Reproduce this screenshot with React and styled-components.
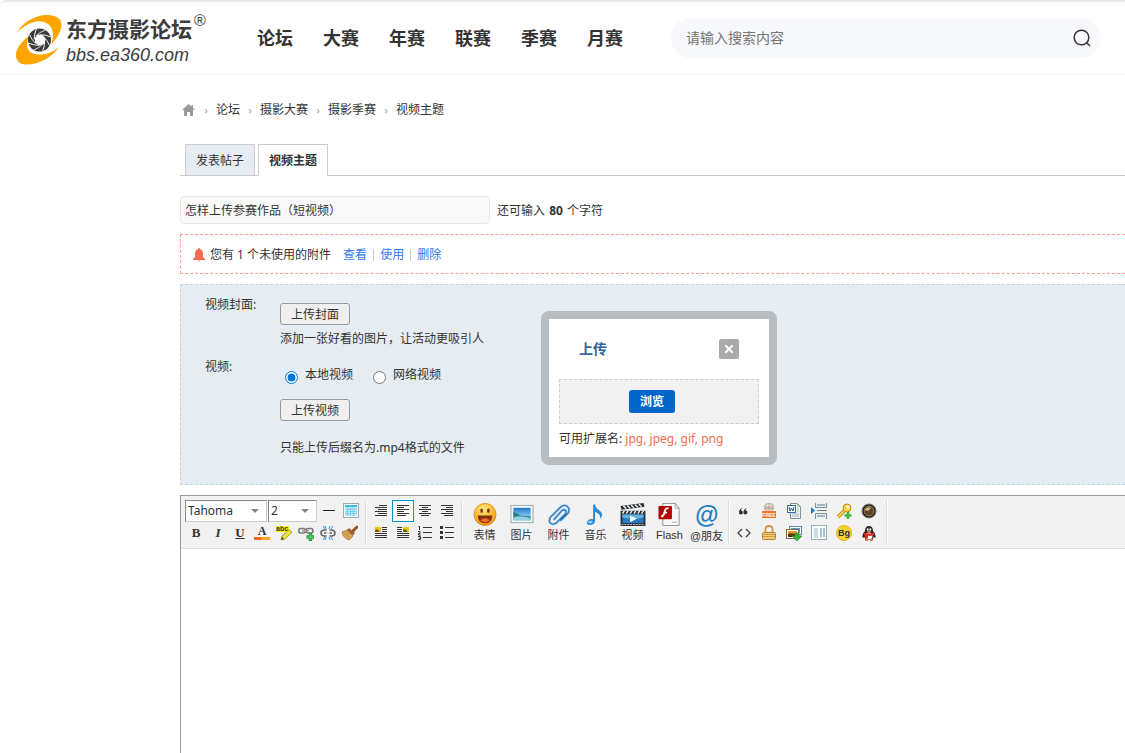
import React, { useState } from 'react';
import styled, { createGlobalStyle, css } from 'styled-components';

const uiFont = '"Noto Sans", "Noto Sans CJK SC", sans-serif';

const GlobalStyle = createGlobalStyle`
    * {
        box-sizing: border-box;
    }
    body {
        margin: 0;
        background: #fff;
        color: #333;
        font: 12px/20px ${uiFont};
    }
    button, input, select, textarea {
        font: inherit;
        color: inherit;
    }
    a {
        color: inherit;
        text-decoration: none;
    }
`

const Page = styled.div`
    display: flex;
    flex-direction: column;
    min-height: 100vh;
`

/* header */
const Header = styled.header`
    display: flex;
    align-items: center;
    height: 75px;
    padding: 0 24px 0 15px;
    border-top: 2px solid #e9e9e9;
    border-bottom: 1px solid #f6f6f6;
    border-top-left-radius: 6px;
`
const Logo = styled.a`
    display: flex;
    align-items: center;
    gap: 3px;
    flex: none;
    width: 242px;
    padding-top: 4px;
    color: #3c3c3c;
`
const LogoText = styled.span`
    display: flex;
    flex-direction: column;
    white-space: nowrap;
`
const LogoName = styled.strong`
    font: 700 21px/30px "Noto Sans CJK SC", sans-serif;

    & > sup {
        position: absolute;
        margin: -2px 0 0 2px;
        font: 16px/20px "Liberation Sans", sans-serif;
    }
`
const LogoHost = styled.span`
    font: italic 18px/24px "Liberation Sans", sans-serif;
`
const Nav = styled.nav`
    display: flex;
    gap: 30px;
    margin-right: 48px;
    font-size: 18px;
    line-height: 28px;
    font-weight: 700;
    white-space: nowrap;
`
const SearchBox = styled.form`
    display: flex;
    align-items: center;
    flex: 1;
    height: 40px;
    padding: 0 8px 0 15px;
    border-radius: 20px;
    background: #f6f8fc;

    & > input {
        flex: 1;
        min-width: 0;
        padding: 0;
        border: 0;
        outline: 0;
        background: none;
        font-size: 14px;
    }
    & > input::placeholder {
        color: #757575;
    }
    & > button {
        display: flex;
        padding: 0;
        border: 0;
        background: none;
    }
`

/* content */
const Main = styled.main`
    display: flex;
    flex-direction: column;
    flex: 1;
    padding: 21px 0 0 180px;
`
const Crumbs = styled.nav`
    display: flex;
    align-items: center;
    height: 28px;
    margin-bottom: 20px;

    & > a:first-child {
        display: flex;
        padding: 0 1px 0 2px;
    }
    & > i {
        width: 20px;
        color: #999;
        font-size: 10px;
        font-style: normal;
        text-align: center;
    }
`
const Tabs = styled.nav`
    display: flex;
    gap: 3px;
    margin-bottom: 20px;
    padding-left: 5px;
    box-shadow: inset 0 -1px #cdcdcd;
`
const Tab = styled.a`
    height: 32px;
    padding: 0 10px;
    border: 1px solid #cdcdcd;
    background: #e5edf2;
    line-height: 31px;

    ${props => props.$active && css`
        border-bottom-color: #fff;
        background: #fff;
        font-weight: 700;
    `}
`
const TitleRow = styled.div`
    display: flex;
    align-items: baseline;
    gap: 7px;
    margin-bottom: 10px;

    & strong {
        margin: 0 1px;
    }
`
const TitleInput = styled.input`
    width: 310px;
    height: 28px;
    padding: 0 4px;
    border: 1px solid #e6e6f2;
    border-radius: 4px;
    background: #f9f9f9;
`
const Notice = styled.div`
    display: flex;
    align-items: center;
    height: 40px;
    margin-bottom: 10px;
    padding: 2px 0 0 12px;
    border: 1px dashed #f99;
    border-right: 0;

    & > span {
        margin: 0 12px 0 5px;
    }
    & > a {
        color: #2b7af5;
    }
    & > i {
        width: 1px;
        height: 12px;
        margin: 0 6px;
        background: #ccc;
    }
`
const VideoPanel = styled.section`
    position: relative;
    display: grid;
    grid-template-columns: 75px 1fr;
    row-gap: 8px;
    margin-bottom: 10px;
    padding: 10px 24px 26px;
    border: 1px dashed #bdd7e5;
    border-right: 0;
    background: #e5ecf2;
`
const Field = styled.div`
    display: flex;
    flex-direction: column;
    align-items: flex-start;
    padding-top: 8px;
`
const PlainButton = styled.button`
    height: 22px;
    padding: 2px 10px 0;
    border: 1px solid #999;
    border-radius: 3px;
    background: #efefef;
    line-height: 18px;
`
const Radios = styled.div`
    display: flex;
    gap: 20px;
    height: 22px;
    margin-bottom: 12px;
    padding-left: 5px;

    & > label {
        display: flex;
        gap: 7px;
    }
    & input {
        width: 13px;
        height: 13px;
        margin: 6px 0 0;
        accent-color: #0078d7;
    }
`
const Hint = styled.p`
    margin: ${props => props.$top}px 0 0;
`

/* upload window */
const Dialog = styled.div`
    position: absolute;
    top: 26px;
    left: 360px;
    width: 236px;
    padding: 20px 10px 8px;
    border: 8px solid #b7bdc1;
    border-radius: 8px;
    background: #fff;
`
const DialogHead = styled.div`
    display: flex;
    align-items: center;
    justify-content: space-between;
    margin-bottom: 20px;
    padding: 0 20px;

    & > h3 {
        margin: 0;
        color: #369;
        font-size: 14px;
        line-height: 20px;
        font-weight: 700;
    }
    & > button {
        display: flex;
        align-items: center;
        justify-content: center;
        width: 20px;
        height: 20px;
        padding: 0;
        border: 0;
        border-radius: 2px;
        background: #aaa;
    }
`
const DropArea = styled.div`
    display: flex;
    align-items: center;
    justify-content: center;
    height: 45px;
    margin-bottom: 5px;
    padding-right: 14px;
    border: 1px dashed #ccc;
    background: #f1f1f1;

    & > button {
        height: 23px;
        padding: 0 11px;
        border: 0;
        border-radius: 3px;
        background: #06c;
        color: #fff;
        font-weight: 700;
        line-height: 23px;
    }
`
const Extensions = styled.p`
    margin: 0;
    white-space: nowrap;

    & > span {
        color: #f26c4f;
    }
`

/* editor */
const Editor = styled.section`
    display: flex;
    flex-direction: column;
    flex: 1;
    border-top: 1px solid #999;
    border-left: 1px solid #999;

    & > textarea {
        flex: 1;
        min-height: 200px;
        padding: 8px;
        border: 0;
        outline: 0;
        resize: none;
    }
`
const Toolbar = styled.div`
    display: flex;
    padding: 4px 0;
    border-bottom: 1px solid #ddd;
    background: #f2f2f2;
`
const Group = styled.div`
    padding: ${props => props.$wide ? '0 5px 0 2px' : '0 3px 0 4px'};
    border-right: 1px solid #ddd;
    box-shadow: 1px 0 #fff;
`
const ToolRow = styled.div`
    display: flex;
    height: 22px;
`
const SelectBox = styled.label`
    display: grid;
    align-items: center;
    width: ${props => props.$width}px;
    margin-right: 1px;
    border: 1px solid #ccc;
    border-top-color: #888;
    border-left-color: #888;
    background: #fff;

    & > select, & > svg {
        grid-area: 1 / 1;
    }
    & > select {
        height: 20px;
        padding: 0 0 0 2px;
        border: 0;
        outline: 0;
        appearance: none;
        background: none;
        font-size: 12px;
        line-height: 20px;
    }
    & > svg {
        justify-self: end;
        margin-right: 7px;
        pointer-events: none;
    }
`
const Tool = styled.button`
    display: flex;
    align-items: center;
    justify-content: center;
    width: ${props => props.$wide ? 25 : 22}px;
    height: 22px;
    padding: 0;
    border: 1px solid ${props => props.$active ? '#09c' : 'transparent'};
    background: ${props => props.$active ? '#fff' : 'none'};
`
const Letter = styled.span`
    font: bold 13px/16px "Liberation Serif", serif;
    font-style: ${props => props.$italic ? 'italic' : 'normal'};
    text-decoration: ${props => props.$underline ? 'underline' : 'none'};
`
const BigTool = styled.button`
    display: flex;
    flex-direction: column;
    align-items: center;
    width: 37px;
    height: 44px;
    padding: 3px 0 0;
    border: 0;
    background: none;
    font: 11px/18px "Liberation Sans", "Noto Sans CJK SC", sans-serif;
    white-space: nowrap;
`
const AtSign = styled.span`
    height: 24px;
    color: #237dc1;
    font: italic bold 24px/24px "Liberation Sans", sans-serif;
`

const Svg = ({ size = 16, children }) => (
    <svg width={size} height={size} viewBox={`0 0 ${size} ${size}`} fill="none" aria-hidden="true">
        {children}
    </svg>
)

// rows of [x, y, width]
const Lines = ({ rows, children }) => (
    <Svg>
        {rows.map(([x, y, w]) => <rect key={y} x={x} y={y} width={w} height="1" fill="#333" />)}
        {children}
    </Svg>
)

const Blades = () => (
    <g>
        <circle cx="24.5" cy="26" r="11.5" fill="#3c3c3c" />
        <path d="M23 20.500l5 1 2.500 4-1.500 4.500-5 1.500-4-3 0-5z" fill="#fff" />
        {[0, 45, 90, 135, 180, 225, 270, 315].map(a => (
            <path key={a} d="M21 22Q25 18 30 16" stroke="#fff" strokeWidth=".9" transform={`rotate(${a} 24.500 26)`} />
        ))}
    </g>
)

const LogoMark = () => (
    <svg width="48" height="52" viewBox="0 0 48 52" fill="none" aria-hidden="true">
        <path d="M2 19C8 6 27-2 39 2c11 3 10 15-3 29 4-11 2-20-7-23C20 5 9 11 2 19z" fill="#ffa500" />
        <path d="M14 22C1 31-3 44 5 49c10 5 31-3 39-16-7 6-16 9-24 7-8-2-10-9-6-18z" fill="#ffa500" />
        <Blades />
    </svg>
)

const icons = {
    hr: <Svg><rect x="2" y="7" width="12" height="1" fill="#222" /></Svg>,
    table: (
        <Svg>
            <rect x=".5" y=".5" width="15" height="14" fill="#fff" stroke="#9aabb2" />
            <rect x="2" y="2" width="12" height="11" fill="#bfeafb" />
            <rect x="2" y="2" width="12" height="2" fill="#37b6e8" />
            <path d="M2 6.500h12M2 8.500h12M2 10.500h12M4.500 2v11M7.500 2v11M10.500 2v11" stroke="#66c8ee" strokeWidth=".7" />
        </Svg>
    ),
    color: (
        <Svg>
            <text x="8" y="10" textAnchor="middle" fill="#333" fontFamily="Liberation Serif" fontWeight="bold" fontSize="12">A</text>
            <rect y="12" width="16" height="3" fill="#f26c1a" />
            <rect x="7" y="12" width="9" height="3" fill="#ffa51f" />
        </Svg>
    ),
    mark: (
        <Svg>
            <rect y="1" width="13" height="6" fill="#fff200" />
            <text x="0" y="6" fill="#333" fontFamily="Liberation Sans" fontWeight="bold" fontSize="7">abc</text>
            <path d="M13 5l3 2-7 7-4 1 1-4z" fill="#f1e52e" stroke="#93921c" strokeWidth=".8" />
            <path d="M5 15l1-3 2 2z" fill="#444" />
        </Svg>
    ),
    link: (
        <Svg>
            <rect x=".7" y="3.500" width="7" height="4.500" rx="2.200" stroke="#777" strokeWidth="1.500" />
            <rect x="8" y="3.500" width="7" height="4.500" rx="2.200" stroke="#777" strokeWidth="1.500" />
            <path d="M4 5.700h7" stroke="#999" strokeWidth="1.500" />
            <path d="M12.500 8v8M8.500 12h7.500" stroke="#25953a" strokeWidth="3.400" />
            <path d="M12.500 9v6M9.500 12h6" stroke="#57cc5c" strokeWidth="1.600" />
        </Svg>
    ),
    unlink: (
        <Svg>
            <path d="M6.500 5H4Q1 5.500 1 8t3 3h2.500M9.500 5H12q3 .5 3 3t-3 3H9.500M4 8h2.500M9.500 8H12" stroke="#666" strokeWidth="1.600" />
            <path d="M5 1l1 3M10 1L9 4M13 1l-2 3M3 1l2 3M5 15l1-3M10 15l-1-3M13 15l-2-3M3 15l2-3" stroke="#4d94d8" />
        </Svg>
    ),
    brush: (
        <Svg>
            <path d="M15 2l-4 4" stroke="#8d531e" strokeWidth="3" strokeLinecap="round" />
            <path d="M7 3l6 5-3 3-6-5z" fill="#9a6235" />
            <path d="M5 5l6 6-4 4Q1 13 0 7z" fill="#dda657" stroke="#9b662b" strokeWidth=".7" />
            <path d="M2 8l5 5M4 7l4 5" stroke="#b57d3a" strokeWidth=".7" />
        </Svg>
    ),
    typeset: <Lines rows={[[6, 2, 8], [2, 4, 12], [5, 6, 9], [2, 8, 12], [5, 10, 9], [2, 12, 12]]} />,
    left: <Lines rows={[[2, 2, 12], [2, 4, 7], [2, 6, 12], [2, 8, 7], [2, 10, 12], [2, 12, 9]]} />,
    center: <Lines rows={[[2, 2, 12], [5, 4, 6], [2, 6, 12], [5, 8, 6], [2, 10, 12], [4, 12, 8]]} />,
    right: <Lines rows={[[2, 2, 12], [7, 4, 7], [2, 6, 12], [7, 8, 7], [2, 10, 12], [5, 12, 9]]} />,
    floatLeft: (
        <Lines rows={[[9, 2, 5], [9, 4, 5], [9, 6, 5], [2, 8, 12], [2, 10, 12], [2, 12, 12]]}>
            <rect x="2" y="2" width="6" height="5" fill="#f0c419" /><path d="M2 7V5l2-1 3 3z" fill="#755a12" />
        </Lines>
    ),
    floatRight: (
        <Lines rows={[[2, 2, 5], [2, 4, 5], [2, 6, 5], [2, 8, 12], [2, 10, 12], [2, 12, 12]]}>
            <rect x="8" y="2" width="6" height="5" fill="#f0c419" /><path d="M8 7V5l2-1 3 3z" fill="#755a12" />
        </Lines>
    ),
    ordered: (
        <Lines rows={[[6, 2, 9], [6, 7, 9], [6, 12, 9]]}>
            <path d="M1.500 2L2.500 1v4M1 6.500h2v2H1.500V10H4M1 11.500h2.500v3H1M2 13h1" stroke="#333" />
        </Lines>
    ),
    unordered: (
        <Lines rows={[[6, 2, 9], [6, 7, 9], [6, 12, 9]]}>
            <path d="M1 1h3v3H1zM1 6h3v3H1zM1 11h3v3H1z" fill="#333" />
        </Lines>
    ),
    quote: (
        <Svg>
            <path d="M6.500 5Q3 6 3 9a2 2 0 1 0 2-1.500Q5 6 6.500 5zM11 5Q7.500 6 7.500 9a2 2 0 1 0 2-1.500Q9.500 6 11 5z" fill="#333" />
        </Svg>
    ),
    free: (
        <Svg>
            <path d="M5 1q3-1 6 0 3 2 1 6H4Q2 3 5 1z" fill="#eadfd5" stroke="#b79c87" strokeWidth=".8" />
            <path d="M4 3l8 3M12 3L4 6M8 1v6M4 5h8" stroke="#b79c87" strokeWidth=".7" />
            <rect x="1" y="8" width="14" height="7" fill="#ef7423" />
            <text x="8" y="14" textAnchor="middle" fill="#fff" fontFamily="Liberation Sans" fontWeight="bold" fontSize="5">FREE</text>
        </Svg>
    ),
    word: (
        <Svg>
            <path d="M4.500.500h7l3 3v12h-10z" fill="#eef4f8" stroke="#81959e" />
            <path d="M11.500.500v3h3M11 6h2M11 8h2M6 11h7M6 13h7" stroke="#a9b9c0" />
            <rect x="1.500" y="2.500" width="8" height="7" fill="#fff" stroke="#3a69a4" />
            <path d="M3 4l1 4 1.500-3L7 8l1-4" stroke="#24589b" />
        </Svg>
    ),
    pageBreak: (
        <Svg>
            <path d="M4.500 0v4.500h11V0M4.500 16v-5.500h11V16" fill="#e6f0f5" stroke="#778f9c" />
            <path d="M6 7.500h10M6 2h8M6 13h8" stroke="#657f8d" />
            <path d="M0 4l4 3.500L0 11z" fill="#2879c4" />
        </Svg>
    ),
    key: (
        <Svg>
            <path d="M9 7l-7 7" stroke="#b78119" strokeWidth="3.500" />
            <path d="M9 7l-7 7" stroke="#ffd34d" strokeWidth="1.800" />
            <circle cx="11" cy="5" r="4" fill="#ffd34d" stroke="#c48a16" /><circle cx="12" cy="4" r="1.400" fill="#fff" />
            <path d="M12 9v7M8.500 12.500h7" stroke="#3fb83f" strokeWidth="2.600" />
        </Svg>
    ),
    lens: (
        <Svg>
            <circle cx="8" cy="8" r="7" fill="#251f1a" stroke="#777" />
            <circle cx="8" cy="8" r="4.800" fill="#5e4026" stroke="#a1825b" />
            <path d="M4 7q2-4 6-2L7 8z" fill="#d7bb88" />
        </Svg>
    ),
    code: <Svg><path d="M6 4L2 8l4 4M10 4l4 4-4 4" stroke="#444" strokeWidth="1.300" /></Svg>,
    lock: (
        <Svg>
            <path d="M4.500 8V4q0-3 3.500-3t3.500 3v4" stroke="#c99b43" strokeWidth="1.800" />
            <rect x="1.500" y="7.500" width="13" height="7" rx="1" fill="#f3cb74" stroke="#b9852f" />
            <path d="M2 9.500h12M2 11.500h12" stroke="#d19b45" />
        </Svg>
    ),
    album: (
        <Svg>
            <rect x="3.500" y="1.500" width="12" height="8" fill="#f4f8fb" stroke="#6687ad" />
            <path d="M5 3h9v5H5z" fill="#569bdb" />
            <rect x=".5" y="4.500" width="12" height="9" fill="#fff" stroke="#87643a" />
            <path d="M2 6h9v6H2z" fill="#e79a3c" /><path d="M2 9q4-2 9 1v2H2z" fill="#633315" />
            <path d="M9 8h4v3h3l-5 5-5-5h3z" fill="#35b735" stroke="#26842b" strokeWidth=".6" />
        </Svg>
    ),
    catalog: (
        <Svg>
            <rect x=".5" y=".5" width="15" height="14" fill="#f7fbfc" stroke="#91b2b9" />
            <path d="M3 4h4M3 6h4M3 8h4M3 10h4M3 12h4" stroke="#a0bfc6" />
            <path d="M9 3h2v9H9zM12 3h2v9h-2z" fill="#a4c3cb" />
        </Svg>
    ),
    background: (
        <Svg>
            <circle cx="8" cy="8" r="7.500" fill="#f8d32d" stroke="#e7b717" />
            <text x="8" y="11" textAnchor="middle" fill="#333" fontFamily="Liberation Sans" fontWeight="bold" fontSize="9">Bg</text>
        </Svg>
    ),
    qq: (
        <Svg>
            <path d="M4 6q0-5 4-5t4 5q3 3 2.500 7l-2-1q0 3-4.500 3t-4.500-3l-2 1Q1 9 4 6z" fill="#282828" />
            <ellipse cx="8" cy="11" rx="3.500" ry="3.500" fill="#fff" />
            <ellipse cx="6.700" cy="4.500" rx=".9" ry="1.300" fill="#fff" /><ellipse cx="9.300" cy="4.500" rx=".9" ry="1.300" fill="#fff" />
            <path d="M5.500 6h5L8 7.500z" fill="#f7a51d" /><path d="M3 7.500q5 2 10 0v2.500q-4 1.500-6 .5v3H4z" fill="#e32b20" />
            <path d="M4 15h3M9 15h3" stroke="#e0601c" strokeWidth="1.500" />
        </Svg>
    ),
}

const bigIcons = {
    smile: (
        <Svg size={24}>
            <defs>
                <radialGradient id="face" cx=".45" cy=".25" r=".8">
                    <stop stopColor="#ffe47a" /><stop offset=".6" stopColor="#fdb52c" /><stop offset="1" stopColor="#e88618" />
                </radialGradient>
            </defs>
            <circle cx="12" cy="12" r="11.500" fill="url(#face)" stroke="#dc9127" />
            <ellipse cx="8.500" cy="8" rx="1.400" ry="2.300" fill="#713512" /><ellipse cx="15.500" cy="8" rx="1.400" ry="2.300" fill="#713512" />
            <path d="M4.500 13h15q0 8-7.500 8t-7.500-8z" fill="#82310f" />
            <path d="M7 18q5-4 10 0-5 4.500-10 0z" fill="#f36b28" />
        </Svg>
    ),
    image: (
        <Svg size={24}>
            <defs>
                <linearGradient id="sky" x2="0" y2="1"><stop stopColor="#1c75ce" /><stop offset="1" stopColor="#b6edff" /></linearGradient>
            </defs>
            <path d="M0 2h24v19H0z" fill="#94a5ad" /><path d="M1 3h22v17H1z" fill="#f7fafb" />
            <path d="M3 5h18v13H3z" fill="url(#sky)" />
            <path d="M3 9q4 1 7 4l11 1v4H3z" fill="#297e80" /><path d="M3 15q8-3 18 1v2H3z" fill="#90cfe2" />
        </Svg>
    ),
    clip: (
        <Svg size={24}>
            <g strokeLinecap="round">
                <path d="M7 17l8-9q3-2 4 0t-1 4l-9 9q-4 2-6 0t0-6L14 4q4-3 7 0t0 7l-7 7" stroke="#b6d9ef" strokeWidth="3" />
                <path d="M7 17l8-9q3-2 4 0t-1 4l-9 9q-4 2-6 0t0-6L14 4q4-3 7 0t0 7l-7 7" stroke="#2b76ba" strokeWidth="1.400" />
            </g>
        </Svg>
    ),
    music: (
        <Svg size={24}>
            <path d="M9 2l2-1q0 4 5 7 5 4 0 9 2-5-5-8v10q-1 4-5 4-5 0-3-4 2-3 6-2z" fill="#248bd9" />
            <ellipse cx="6" cy="20" rx="2.500" ry="1.500" fill="#86caef" />
        </Svg>
    ),
    video: (
        <svg width="26" height="24" viewBox="0 1 26 24" fill="none" aria-hidden="true">
            <path d="M0 9h26v16H0zM0 4l24-3 1 4L1 8z" fill="#2b3036" />
            <path d="M3 4l3 3M7 3.500l3 3M11 3l3 3M15 2.500l3 3M19 2l3 3M4 9l-2 3M8 9l-2 3M12 9l-2 3M16 9l-2 3M20 9l-2 3M24 9l-2 3" stroke="#eee" strokeWidth="1.500" />
            <path d="M2 13h22v9H2z" fill="#2979c1" /><path d="M2 13h22v3q-11 3-22 0z" fill="#61b3e6" />
            <path d="M10 14v7l7-3.500z" fill="#fff" /><path d="M1 23.500h24" stroke="#ccc" strokeDasharray="2 1" />
        </svg>
    ),
    flash: (
        <Svg size={24}>
            <path d="M4.500.500h13l4 5v18h-17z" fill="#f8f8f8" stroke="#8d9294" /><path d="M17.500.500v5h4M14 20h5" stroke="#a1a6a8" />
            <rect x="0" y="3" width="14" height="14" rx="1" fill="#b50000" />
            <path d="M10.500 5.500Q7 5 6.500 9T3 14.500M5 10h4" stroke="#fff" strokeWidth="2" />
        </Svg>
    ),
    at: <AtSign aria-hidden="true">@</AtSign>,
}

const bigTools = [
    ['smile', '表情'], ['image', '图片'], ['clip', '附件'], ['music', '音乐'],
    ['video', '视频'], ['flash', 'Flash'], ['at', '@朋友'],
]

function Tools({ names, active, wide }) {
    return names.map(name => (
        <Tool key={name} type="button" aria-label={name} $active={name === active} $wide={wide}>
            {icons[name]}
        </Tool>
    ))
}

function ToolSelect({ label, width, options }) {
    return (
        <SelectBox $width={width}>
            <select aria-label={label} defaultValue={options[0]}>
                {options.map(o => <option key={o}>{o}</option>)}
            </select>
            <svg width="8" height="4" viewBox="0 0 8 4" aria-hidden="true"><path d="M0 0h8L4 4z" fill="#888" /></svg>
        </SelectBox>
    )
}

function SiteHeader() {
    return (
        <Header>
            <Logo href="#">
                <LogoMark />
                <LogoText>
                    <LogoName>东方摄影论坛<sup>®</sup></LogoName>
                    <LogoHost>bbs.ea360.com</LogoHost>
                </LogoText>
            </Logo>
            <Nav>
                {['论坛', '大赛', '年赛', '联赛', '季赛', '月赛'].map(n => <a key={n} href="#">{n}</a>)}
            </Nav>
            <SearchBox onSubmit={e => e.preventDefault()}>
                <input type="text" aria-label="搜索" placeholder="请输入搜索内容" />
                <button type="submit" aria-label="搜索">
                    <svg width="22" height="22" viewBox="0 0 22 22" fill="none" stroke="#333" strokeWidth="1.500">
                        <circle cx="10.500" cy="10.500" r="7.300" /><path d="M15.500 15.500l3.500 3.500" />
                    </svg>
                </button>
            </SearchBox>
        </Header>
    )
}

function UploadDialog({ onClose }) {
    return (
        <Dialog role="dialog" aria-label="上传">
            <DialogHead>
                <h3>上传</h3>
                <button type="button" aria-label="关闭" onClick={onClose}>
                    <svg width="8" height="8" viewBox="0 0 8 8" stroke="#fff" strokeWidth="2"><path d="M0 0l8 8M8 0L0 8" /></svg>
                </button>
            </DialogHead>
            <DropArea><button type="button">浏览</button></DropArea>
            <Extensions>可用扩展名: <span>jpg, jpeg, gif, png</span></Extensions>
        </Dialog>
    )
}

function App() {
    const [source, setSource] = useState('local')
    const [dialog, setDialog] = useState(true)

    return (
        <Page>
            <GlobalStyle />
            <SiteHeader />
            <Main>
                <Crumbs>
                    <a href="#" aria-label="首页">
                        <svg width="13" height="12" viewBox="0 0 13 12" fill="#999"><path d="M6.500 0L0 6h2v6h3V8h3v4h3V6h2l-2-2V1H9.500v1.600z" /></svg>
                    </a>
                    <i>›</i><a href="#">论坛</a>
                    <i>›</i><a href="#">摄影大赛</a>
                    <i>›</i><a href="#">摄影季赛</a>
                    <i>›</i><span>视频主题</span>
                </Crumbs>

                <Tabs>
                    <Tab href="#">发表帖子</Tab>
                    <Tab href="#" $active>视频主题</Tab>
                </Tabs>

                <TitleRow>
                    <TitleInput type="text" aria-label="标题" defaultValue="怎样上传参赛作品（短视频）" />
                    <span>还可输入 <strong>80</strong> 个字符</span>
                </TitleRow>

                <Notice>
                    <svg width="12" height="14" viewBox="0 0 12 14" fill="#f26c4f" aria-hidden="true">
                        <path d="M5 1a1 1 0 0 1 2 0q3 1 3 5v3l2 2v1H0v-1l2-2V6q0-4 3-5zM4.500 12.500h3Q6 14.500 4.500 12.500z" />
                    </svg>
                    <span>您有 1 个未使用的附件</span>
                    <a href="#">查看</a><i />
                    <a href="#">使用</a><i />
                    <a href="#">删除</a>
                </Notice>

                <VideoPanel>
                    <span>视频封面:</span>
                    <Field>
                        <PlainButton type="button" onClick={() => setDialog(true)}>上传封面</PlainButton>
                        <Hint $top={4}>添加一张好看的图片，让活动更吸引人</Hint>
                    </Field>
                    <span>视频:</span>
                    <Field>
                        <Radios>
                            <label>
                                <input type="radio" name="source" checked={source === 'local'} onChange={() => setSource('local')} />
                                本地视频
                            </label>
                            <label>
                                <input type="radio" name="source" checked={source === 'web'} onChange={() => setSource('web')} />
                                网络视频
                            </label>
                        </Radios>
                        <PlainButton type="button">上传视频</PlainButton>
                        <Hint $top={17}>只能上传后缀名为.mp4格式的文件</Hint>
                    </Field>
                    {dialog && <UploadDialog onClose={() => setDialog(false)} />}
                </VideoPanel>

                <Editor>
                    <Toolbar>
                        <Group>
                            <ToolRow>
                                <ToolSelect label="字体" width={82} options={['Tahoma', 'Arial', 'Verdana']} />
                                <ToolSelect label="字号" width={49} options={['2', '3', '4', '5']} />
                                <Tools names={['hr', 'table']} />
                            </ToolRow>
                            <ToolRow>
                                <Tool type="button"><Letter>B</Letter></Tool>
                                <Tool type="button"><Letter $italic>I</Letter></Tool>
                                <Tool type="button"><Letter $underline>U</Letter></Tool>
                                <Tools names={['color', 'mark', 'link', 'unlink', 'brush']} />
                            </ToolRow>
                        </Group>
                        <Group>
                            <ToolRow><Tools names={['typeset', 'left', 'center', 'right']} active="left" /></ToolRow>
                            <ToolRow><Tools names={['floatLeft', 'floatRight', 'ordered', 'unordered']} /></ToolRow>
                        </Group>
                        <Group>
                            <ToolRow>
                                {bigTools.map(([name, label]) => (
                                    <BigTool key={name} type="button">{bigIcons[name]}{label}</BigTool>
                                ))}
                            </ToolRow>
                        </Group>
                        <Group $wide>
                            <ToolRow><Tools wide names={['quote', 'free', 'word', 'pageBreak', 'key', 'lens']} /></ToolRow>
                            <ToolRow><Tools wide names={['code', 'lock', 'album', 'catalog', 'background', 'qq']} /></ToolRow>
                        </Group>
                    </Toolbar>
                    <textarea aria-label="内容" />
                </Editor>
            </Main>
        </Page>
    )
}

export default App;
